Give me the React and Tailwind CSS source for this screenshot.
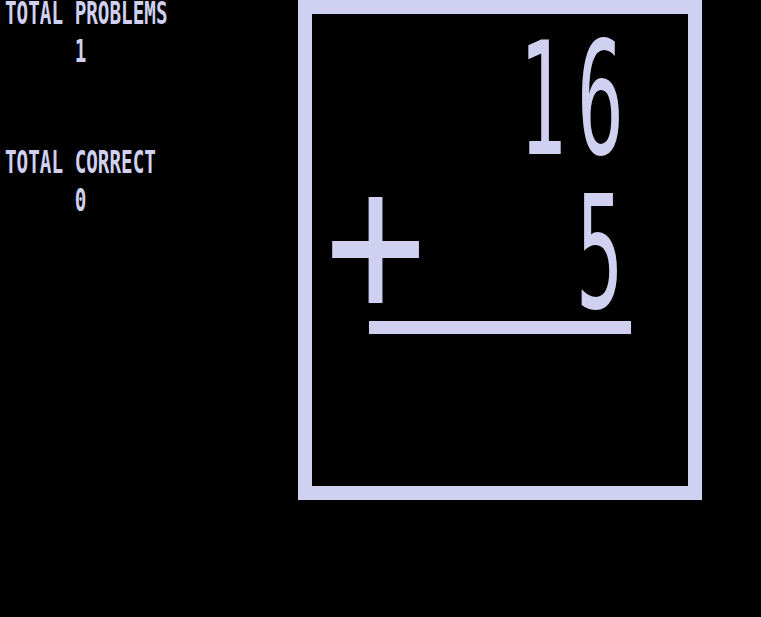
// Pantalla de práctica de sumas, estilo monitor antiguo.
const INK = 'text-[#d0d0f0]'

function SmallLine({ children, className = '' }) {
  return (
    <div className={`h-[23px] ${className}`}>
      <span className="block whitespace-pre font-['DejaVu_Sans_Mono',monospace] text-[19.3px] font-bold leading-none -mt-[2px] origin-[0_2px] scale-y-[1.63]">
        {children}
      </span>
    </div>
  )
}

function BigGlyph({ children }) {
  return (
    <div className="h-[115px]">
      <span className="block font-['DejaVu_Sans_Mono',monospace] text-[78px] leading-none -mt-[9px] origin-[50%_9px] scale-y-[2.02]">
        {children}
      </span>
    </div>
  )
}

export default function App() {
  return (
    <div className={`flex h-[617px] w-[761px] overflow-hidden bg-black ${INK}`}>
      <div className="w-[298px] shrink-0 pl-[5px] pt-[1px]">
        <SmallLine>TOTAL PROBLEMS</SmallLine>
        <SmallLine className="mt-[17px]">      1</SmallLine>
        <SmallLine className="mt-[90px]">TOTAL CORRECT</SmallLine>
        <SmallLine className="mt-[17px]">      0</SmallLine>
      </div>

      <div className="flex h-[500px] w-[404px] shrink-0 flex-col border-[14px] border-[#d0d0f0]">
        <div className="mt-[25px] flex pl-[207px] gap-[11px]">
          <BigGlyph>1</BigGlyph>
          <BigGlyph>6</BigGlyph>
        </div>
        <div className="mt-[39px] flex items-start pl-[13px] gap-[150px]">
          <div className="h-[115px]">
            <span className="block font-['DejaVu_Sans_Mono',monospace] text-[168px] leading-none -mt-[43px] origin-[50%_43px] scale-y-[1.22]">
              +
            </span>
          </div>
          <BigGlyph>5</BigGlyph>
        </div>
        <div className="ml-[57px] mt-[13px] h-[13px] w-[262px] bg-[#d0d0f0]" />
      </div>
    </div>
  )
}
